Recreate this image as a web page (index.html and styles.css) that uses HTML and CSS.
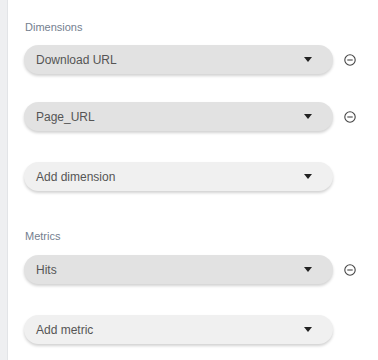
FILE: index.html
```html
<!DOCTYPE html>
<html lang="en">
<head>
  <meta charset="UTF-8" />
  <title>Query fields</title>
  <link rel="stylesheet" href="styles.css">
</head>
<body>
  <div class="panel">
    <div class="section-label">Dimensions</div>
    <div class="field-row">
      <div class="pill selected"><span>Download URL</span><i class="caret"></i></div>
      <svg class="remove" viewBox="0 0 12 12"><circle cx="6" cy="6" r="5.2"/><line x1="3.3" y1="6" x2="8.7" y2="6"/></svg>
    </div>
    <div class="field-row">
      <div class="pill selected"><span>Page_URL</span><i class="caret"></i></div>
      <svg class="remove" viewBox="0 0 12 12"><circle cx="6" cy="6" r="5.2"/><line x1="3.3" y1="6" x2="8.7" y2="6"/></svg>
    </div>
    <div class="field-row add-row">
      <div class="pill add"><span>Add dimension</span><i class="caret"></i></div>
    </div>

    <div class="section-label metrics">Metrics</div>
    <div class="field-row">
      <div class="pill selected"><span>Hits</span><i class="caret"></i></div>
      <svg class="remove" viewBox="0 0 12 12"><circle cx="6" cy="6" r="5.2"/><line x1="3.3" y1="6" x2="8.7" y2="6"/></svg>
    </div>
    <div class="field-row add-row">
      <div class="pill add"><span>Add metric</span><i class="caret"></i></div>
    </div>
  </div>
</body>
</html>
```

FILE: styles.css
```css
body { margin: 0; background: #fff; font-family: "Liberation Sans", Arial, sans-serif; color: #555; }
.panel { min-height: 360px; box-sizing: border-box; border-left: 7px solid #eeeff1; padding: 21px 0 0 17px; box-shadow: inset 1px 0 0 #e2e4e7; }
.section-label { font-size: 11px; color: #74808f; height: 13px; margin-left: 1px; margin-bottom: 11px; }
.section-label.metrics { margin-bottom: 12px; }
.field-row { display: flex; align-items: center; margin-bottom: 28px; }
.field-row.add-row { margin-top: 31px; margin-bottom: 39px; }
.pill { width: 309px; height: 29px; box-sizing: border-box; border-radius: 15px; display: flex; align-items: center; justify-content: space-between; padding: 0 21px 0 12px; font-size: 12px; color: #555; box-shadow: 0 2px 3px rgba(0,0,0,0.18); }
.pill.selected { background: #e2e2e2; }
.pill.add { background: #f0f0f0; }
.caret { width: 0; height: 0; border-left: 4.5px solid transparent; border-right: 4.5px solid transparent; border-top: 5px solid #222; }
.remove { width: 12px; height: 12px; margin-left: 11px; fill: none; stroke: #444; stroke-width: 1.1; }
```
